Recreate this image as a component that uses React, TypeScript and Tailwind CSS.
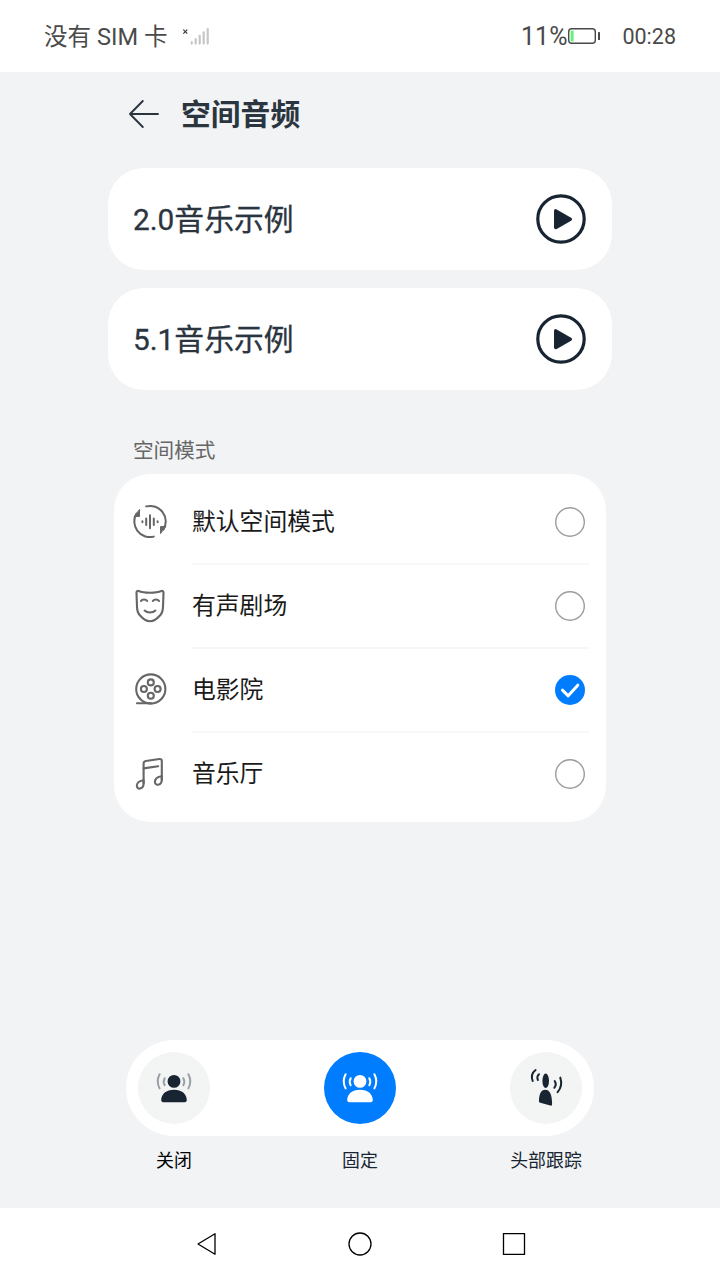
import { useState } from "react";
import type { ReactNode } from "react";

interface IconProps {
  className?: string;
}

function SignalIcon() {
  return (
    <svg width="28" height="20" viewBox="0 0 28 20" fill="none">
      <path d="M1.3 3.6l4 4M5.3 3.6l-4 4" stroke="#333" strokeWidth="1.1" />
      <path d="M9.7 16.2v1.4M13.7 13.2v4.4M17.7 9.8v7.8M21.7 6.4v11.2M25.7 3v14.6" stroke="#c6c6c6" strokeWidth="2.2" strokeLinecap="round" />
    </svg>
  );
}

function BatteryIcon() {
  return (
    <svg width="34" height="18" viewBox="0 0 34 18" fill="none">
      <rect x="1.7" y="1.7" width="26.6" height="14.6" rx="3" stroke="#4a4a4a" strokeWidth="1.4" />
      <rect x="3.6" y="3.6" width="3" height="10.8" fill="#64f07c" />
      <rect x="31" y="5" width="2" height="8" rx="0.6" fill="#4a4a4a" />
    </svg>
  );
}

function BackIcon() {
  return (
    <svg width="32" height="30" viewBox="0 0 32 30" fill="none" stroke="#2b3540" strokeWidth="1.9" strokeLinecap="round" strokeLinejoin="round">
      <path d="M30 15H2M14.8 2L2 15l12.8 13" />
    </svg>
  );
}

function PlayIcon() {
  return (
    <svg width="50" height="50" viewBox="0 0 50 50" fill="none">
      <circle cx="25" cy="25" r="23.2" stroke="#182431" strokeWidth="3.2" />
      <path d="M19.8 17v16.4L34.2 25.2z" fill="#182431" stroke="#182431" strokeWidth="3.6" strokeLinejoin="round" />
    </svg>
  );
}

function DefaultModeIcon() {
  return (
    <svg width="36" height="36" viewBox="0 0 36 36" fill="none" stroke="#666" strokeWidth="2" strokeLinecap="round">
      <path d="M14.2 2.4A15.6 15.6 0 0 1 31.5 25.5" />
      <path d="M21.8 32.6A15.6 15.6 0 0 1 4.5 9.5" />
      <path d="M7.5 5.8v6.6l-5 .2z" fill="#666" strokeWidth="1" strokeLinejoin="round" />
      <path d="M28.5 29.2v-6.6l5-.2z" fill="#666" strokeWidth="1" strokeLinejoin="round" />
      <path d="M10.4 17.2v1M14.2 14.4v6.6M18 11.2v13M21.8 14.4v6.6M25.6 17.2v1" />
    </svg>
  );
}

function MaskIcon() {
  return (
    <svg width="36" height="36" viewBox="0 0 36 36" fill="none" stroke="#666" strokeWidth="2.1" strokeLinecap="round" strokeLinejoin="round">
      <path d="M6.5 3c3.2 1.3 7.2 1.7 11.5 1.7S26.3 4.3 29.5 3c1-.4 2 .2 2 1.4v1L31 18.6c-.1 3.400-.6 6.200-2.600 8.400-2.600 3-6.200 6.200-10.400 6.200S10.200 30 7.600 27c-2-2.200-2.500-5-2.600-8.400L4.500 5.400v-1c0-1.200 1-1.800 2-1.400z" />
      <path d="M9 13c1.2-2 4.8-2 6.2 0M20.8 13c1.4-2 5-2 6.200 0M12.6 22.600c2.800 2.600 8 2.600 10.800 0" />
    </svg>
  );
}

function FilmIcon() {
  return (
    <svg width="36" height="36" viewBox="0 0 36 36" fill="none" stroke="#666" strokeWidth="2.1" strokeLinecap="round">
      <circle cx="18.8" cy="17" r="14.6" />
      <circle cx="18.8" cy="10.4" r="3" />
      <circle cx="18.8" cy="23.8" r="3" />
      <circle cx="11.9" cy="17" r="3" />
      <circle cx="25.6" cy="17" r="3" />
      <path d="M5 31.3h14" />
    </svg>
  );
}

function MusicIcon() {
  return (
    <svg width="36" height="36" viewBox="0 0 36 36" fill="none" stroke="#666" strokeWidth="2.1" strokeLinecap="round" strokeLinejoin="round">
      <path d="M11.6 27.5V7.6c0-1.500.8-2.400 2.200-2.600l13.600-2c1.500-.2 2.400.6 2.400 2v19" />
      <path d="M11.6 12.4l14.6-2.2" />
      <path d="M11.6 24.2c-4 .4-6.800 2.600-6.800 5.400 0 2.300 1.700 3.300 3.300 2.900 2.200-.5 3.500-2.300 3.500-5z" />
      <path d="M29.8 20.2c-4.200.6-6.900 2.800-6.900 5.600 0 2.300 1.800 3.300 3.400 2.900 2.100-.5 3.500-2.300 3.500-5z" />
    </svg>
  );
}

function PersonIcon({ className }: IconProps) {
  return (
    <svg className={className} width="40" height="36" viewBox="0 0 40 36" fill="none">
      <circle cx="20" cy="11.4" r="6.400" fill="currentColor" />
      <path d="M7.200 30.300c0-6.500 5-10.600 12.800-10.600s12.800 4.100 12.800 10.600c0 1.100-.8 1.900-1.900 1.900H9.100c-1.100 0-1.900-.8-1.900-1.900z" fill="currentColor" />
      <g className="wave" stroke="currentColor" strokeWidth="2" strokeLinecap="round">
        <path d="M5.600 4.200c-2.500 4.700-2.500 9.500 0 14.200M34.400 4.200c2.500 4.700 2.500 9.500 0 14.200" />
        <path d="M10.700 8.200c-1.300 2.300-1.300 4.700 0 7M29.300 8.200c1.300 2.300 1.300 4.700 0 7" />
      </g>
    </svg>
  );
}

function HeadTrackIcon() {
  return (
    <svg width="40" height="40" viewBox="0 0 40 40" fill="none">
      <ellipse cx="19.7" cy="12.8" rx="3.3" ry="7.3" fill="#182431" />
      <path d="M13 33.600c0-7.200 1.800-11.900 6.400-11.900 4.600 0 6.700 5.200 6.700 14.300 0 1.200-.6 1.900-1.800 1.600l-10-2.800c-.8-.2-1.300-.6-1.300-1.200z" fill="#182431" />
      <g stroke="#182431" strokeWidth="2" strokeLinecap="round">
        <path d="M9.600 2c-3.500 2.600-4.500 6.600-2.900 11M13 6.200c-1.800 1.600-2.100 3.500-1.100 5.800" />
        <path d="M34.300 9.600c1.700 5.300.9 10.400-2.700 14.600M28.700 13c1.500 2.400 1.300 4.700-.4 6.800" />
      </g>
    </svg>
  );
}

const samples = ["2.0", "5.1"];

const modes: { label: string; icon: () => ReactNode }[] = [
  { label: "默认空间模式", icon: DefaultModeIcon },
  { label: "有声剧场", icon: MaskIcon },
  { label: "电影院", icon: FilmIcon },
  { label: "音乐厅", icon: MusicIcon },
];

const tracking = ["关闭", "固定", "头部跟踪"];

function Radio({ checked }: { checked: boolean }) {
  return (
    <svg className="mb-px" width="30" height="30" viewBox="0 0 30 30" fill="none">
      {checked ? (
        <>
          <circle cx="15" cy="15" r="15" fill="#007dff" />
          <path d="M7.4 15.2l5.8 5.6L22.800 10.200" stroke="#fff" strokeWidth="3" strokeLinecap="round" strokeLinejoin="round" />
        </>
      ) : (
        <circle cx="15" cy="15" r="14.3" stroke="#9b9c9f" strokeWidth="1.4" />
      )}
    </svg>
  );
}

export default function App() {
  const [mode, setMode] = useState(2);
  const [track, setTrack] = useState(1);

  return (
    <div className="flex h-[1280px] w-[720px] flex-col overflow-hidden bg-[#f1f3f5] font-[Roboto,'Noto_Sans_CJK_SC',sans-serif]">
      <header className="flex h-[72px] shrink-0 items-center bg-white px-[44px] text-[#4a4a4a]">
        <span className="w-[138px] pt-px text-[23.6px] leading-[36px] whitespace-nowrap">没有 SIM 卡</span>
        <SignalIcon />
        <span className="ml-auto pt-px text-[25px] leading-[36px]">11%</span>
        <BatteryIcon />
        <span className="ml-[21px] pt-px text-[21.5px] leading-[36px]">00:28</span>
      </header>

      <main className="flex flex-1 flex-col px-[108px]">
        <div className="flex h-[84px] items-center gap-[21px] pl-5">
          <BackIcon />
          <h1 className="pt-px text-[29.8px] leading-[44px] font-bold text-[#2b3540]">空间音频</h1>
        </div>

        <div className="mt-3 flex flex-col gap-[18px]">
          {samples.map((name) => (
            <div key={name} className="flex h-[102px] items-center justify-between rounded-[36px] bg-white pr-[26px] pl-[25px]">
              <span className="pt-px text-[29.8px] leading-[44px] text-[#2b3540] [-webkit-text-stroke:0.3px_#2b3540]">
                {name}音乐示例
              </span>
              <button><PlayIcon /></button>
            </div>
          ))}
        </div>

        <h2 className="mt-[45px] h-[39px] pl-[25px] text-[20.6px] leading-[32px] text-[#666]">空间模式</h2>

        <div className="mx-[6px] flex h-[348px] flex-col rounded-[36px] bg-white pt-[7px] pr-[17px] pl-[18px]">
          {modes.map((item, i) => (
            <button key={item.label} className="flex h-[84px] items-center text-left" onClick={() => setMode(i)}>
              <span className="pb-[2px]">
                <item.icon />
              </span>
              <span
                className={`ml-6 flex h-full flex-1 items-center justify-between pr-1 ${
                  i < modes.length - 1 ? "border-b-2 border-[#f6f7f8]" : "pb-px"
                }`}
              >
                <span className="pb-px text-[23.8px] leading-[36px] text-[#1a1a1a]">{item.label}</span>
                <Radio checked={mode === i} />
              </span>
            </button>
          ))}
        </div>

        <div className="mx-[18px] mt-auto flex h-24 items-center justify-between rounded-full bg-white px-3">
          {tracking.map((label, i) => (
            <button
              key={label}
              onClick={() => setTrack(i)}
              className={`flex size-[72px] items-center justify-center rounded-full ${
                track === i ? "bg-[#007dff] text-white" : "bg-[#f3f5f5] text-[#182431]"
              }`}
            >
              {i === 2 ? <HeadTrackIcon /> : <PersonIcon className={track === i ? "" : "[&_.wave]:opacity-40"} />}
            </button>
          ))}
        </div>
        <div className="mx-[30px] flex h-[72px] justify-between pt-[11px]">
          {tracking.map((label, i) => (
            <span
              key={label}
              className={`w-[72px] text-center text-[17.9px] leading-[28px] whitespace-nowrap ${
                i === 0 ? "text-black" : "text-[#182431]"
              }`}
            >
              {label}
            </span>
          ))}
        </div>
      </main>

      <nav className="flex h-[72px] shrink-0 items-center justify-between bg-white px-[193px]">
        <svg width="26" height="26" viewBox="0 0 26 26" fill="none" stroke="#000" strokeWidth="1.3">
          <path d="M22 2.7v20.600L5 13z" strokeLinejoin="round" />
        </svg>
        <svg width="26" height="26" viewBox="0 0 26 26" fill="none" stroke="#000" strokeWidth="1.3">
          <circle cx="13" cy="13" r="11" />
        </svg>
        <svg width="26" height="26" viewBox="0 0 26 26" fill="none" stroke="#000" strokeWidth="1.3">
          <path d="M2.500 2.700h21v20.600h-21z" />
        </svg>
      </nav>
    </div>
  );
}
